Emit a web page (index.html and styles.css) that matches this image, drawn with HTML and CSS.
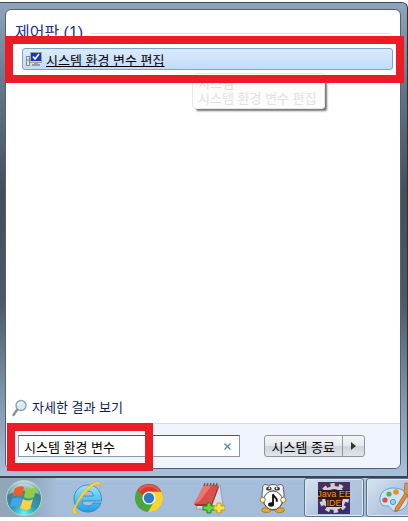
FILE: index.html
```html
<!DOCTYPE html>
<html lang="ko">
<head>
    <meta charset="UTF-8">
    <meta name="viewport" content="width=device-width, initial-scale=1.0">
    <title>시작 메뉴</title>
    <link rel="stylesheet" href="styles.css">
</head>
<body>
    <main class="start-menu">
        <div class="panel">
            <section class="results">
                <h2 class="group-title"><span>제어판 (1)</span></h2>
                <div class="result-row">
                    <a class="result" href="#">
                        <svg class="result-icon" width="16" height="16" viewBox="0 0 16 16">
                            <rect x="0.5" y="5.5" width="3" height="9" fill="#e4e4dc" stroke="#8b8b88"/>
                            <path d="M2 8v2" stroke="#43a047"/>
                            <rect x="4.5" y="1.5" width="11" height="10" fill="#d9d8cf" stroke="#a3a39c"/>
                            <rect x="5" y="2" width="10" height="8" fill="#1537c8"/>
                            <path d="M7 5.500l2 2.500 4-5" fill="none" stroke="#fff" stroke-width="1.600"/>
                            <path d="M8 12h4v1h2v2H6v-2h2z" fill="#9b9b98"/>
                        </svg>
                        <span>시스템 환경 변수 편집</span>
                    </a>
                    <div class="tooltip">시스템<br>시스템 환경 변수 편집</div>
                </div>
                <a class="more" href="#">
                    <svg width="16" height="18" viewBox="0 0 16 18">
                        <path d="M5 11L1.500 16" stroke="#8c8f94" stroke-width="2.400" stroke-linecap="round"/>
                        <circle cx="9" cy="6.500" r="5" fill="#d3eafa" stroke="#8d9dac" stroke-width="1.300"/>
                        <path d="M6 6a3 3 0 0 1 4-2.500" fill="none" stroke="#fff" stroke-width="1.500"/>
                    </svg>
                    <span>자세한 결과 보기</span>
                </a>
            </section>
            <div class="footer">
                <div class="search">
                    <input class="search-input" type="text" value="시스템 환경 변수" aria-label="검색">
                    <button class="clear" type="button" aria-label="지우기">
                        <svg width="7" height="7" viewBox="0 0 7 7"><path d="M.5.5l6 6M6.500.5l-6 6" stroke="#5688ae" stroke-width="1.300"/></svg>
                    </button>
                </div>
                <div class="shutdown">
                    <button class="shutdown-main" type="button">시스템 종료</button>
                    <button class="shutdown-more" type="button" aria-label="종료 옵션">
                        <svg width="5" height="8" viewBox="0 0 5 8"><path d="M0 0l5 4-5 4z" fill="#333"/></svg>
                    </button>
                </div>
            </div>
        </div>
    </main>

    <nav class="taskbar">
        <button class="task orb" type="button" aria-label="시작">
            <svg width="38" height="38" viewBox="0 0 38 38">
                <defs>
                    <radialGradient id="orb" cx=".5" cy=".95" r=".95">
                        <stop offset="0" stop-color="#6ff6f4"/>
                        <stop offset=".35" stop-color="#2b9fb4"/>
                        <stop offset=".7" stop-color="#3f7f93"/>
                        <stop offset="1" stop-color="#d3e4e2"/>
                    </radialGradient>
                    <radialGradient id="glow"><stop offset=".7" stop-color="#76d8a0"/><stop offset="1" stop-color="#76d8a0" stop-opacity="0"/></radialGradient>
                </defs>
                <circle cx="21" cy="20" r="19" fill="url(#glow)" opacity=".8"/>
                <circle cx="19" cy="19" r="17.500" fill="url(#orb)" stroke="#aed8d2"/>
                <path d="M4 15a16 16 0 0 1 30 0q-15-6-30 0z" fill="#fff" opacity=".35"/>
                <path d="M10 9q5-3 9-1l-2 10q-5-3-10 0z" fill="#ee5f27"/>
                <path d="M21 9q5 2 11-1l-3 10q-6 3-10 0z" fill="#8fce3c"/>
                <path d="M7 20q5-3 10 0l-3 9q-4-3-9-1z" fill="#3fa6ee"/>
                <path d="M18 20q5 3 10 0l-3 10q-5 2-10-1z" fill="#ffd23f"/>
            </svg>
        </button>
        <button class="task" type="button" aria-label="Internet Explorer">
            <svg width="34" height="34" viewBox="0 0 34 34">
                <defs>
                    <linearGradient id="ie" x2="0" y2="1"><stop offset="0" stop-color="#9be6ff"/><stop offset="1" stop-color="#1ba0e2"/></linearGradient>
                </defs>
                <path d="M18 4C10 4 4 10 4 18s6 13 14 13c7 0 11-4 13-9h-8c-1 2-2 3-5 3-4 0-6-2-6-5h19.500C32 11 27 4 18 4zM12 15c.5-3 3-5 6-5s5 2 5.500 5z" fill="url(#ie)" fill-rule="evenodd" stroke="#2385c7" stroke-width=".8"/>
                <path d="M6 23C0 31 3 34 9 31c-4 1-5-2-2-7C12 15 19 7 26 3.500c4-1.500 5 1 4 4.500 2-6 0-8-5-6.500C16 5 10 14 6 23z" fill="#ffd33d" stroke="#e9b013" stroke-width=".6"/>
            </svg>
        </button>
        <button class="task" type="button" aria-label="Chrome">
            <svg width="30" height="30" viewBox="0 0 30 30">
                <circle cx="15" cy="15" r="14" fill="#4da63b"/>
                <path d="M15 15L2.900 8A14 14 0 0 1 27.500 8.700H15z" fill="#dc3a2c"/>
                <path d="M27.500 8.700A14 14 0 0 1 14 29l6.500-11L15 8.700z" fill="#fdd32d"/>
                <circle cx="15" cy="15" r="6.600" fill="#f4f4f4"/>
                <circle cx="15" cy="15" r="5.200" fill="#2d7cc5"/>
                <path d="M5 8a12 12 0 0 1 20 0" fill="none" stroke="#fff" stroke-width="2" opacity=".18"/>
            </svg>
        </button>
        <button class="task notes" type="button" aria-label="메모장">
            <svg width="32" height="32" viewBox="0 0 32 32">
                <path d="M12 3h15l3 20-8 4H3z" fill="#d4dce4" stroke="#8a97a5" stroke-width=".8"/>
                <path d="M11 3h14L18 22H1z" fill="#d9504a"/>
                <path d="M11 3h8L7 19l-6 3z" fill="#f08880" opacity=".7"/>
                <path d="M1 22h17l7-19 1 2-7 19H3z" fill="#a9302e"/>
                <path d="M11 4l1-3M14 4l1-3M17 4l1-3M20 4l1-3M23 4l1-3" stroke="#64574f" stroke-width="1.200"/>
                <path d="M14 21h4v3h4v4h-4v3h-4v-3h-4v-4h4z" fill="#69d63c" stroke="#198922"/>
                <path d="M24 21h4v3h4v4h-4v3h-4v-3h-3v-4h3z" fill="#ffe34b" stroke="#c89711"/>
            </svg>
        </button>
        <button class="task" type="button" aria-label="음악 재생기">
            <svg width="28" height="32" viewBox="0 0 30 32">
                <ellipse cx="8" cy="29" rx="5" ry="2.500" fill="#f1a51c" stroke="#8f6417" stroke-width=".7"/>
                <ellipse cx="22" cy="29" rx="5" ry="2.500" fill="#f1a51c" stroke="#8f6417" stroke-width=".7"/>
                <path d="M4 7c-1-5 3-7 6-4 3-2 7-2 10 0 3-3 7-1 6 4 2 6 1 20-11 22C3 27 2 13 4 7z" fill="#f4f4f2" stroke="#555"/>
                <ellipse cx="10.500" cy="6" rx="3" ry="2" fill="#333"/>
                <ellipse cx="19.500" cy="6" rx="3" ry="2" fill="#333"/>
                <circle cx="11" cy="5.500" r="1" fill="#fff"/><circle cx="19" cy="5.500" r="1" fill="#fff"/>
                <ellipse cx="15" cy="8.500" rx="2" ry="1" fill="#b99a5c"/>
                <circle cx="15" cy="18.500" r="10" fill="#fff" stroke="#444"/>
                <circle cx="4" cy="18" r="2.800" fill="#fff3cd" stroke="#8b7643"/>
                <circle cx="26" cy="18" r="2.800" fill="#fff3cd" stroke="#8b7643"/>
                <ellipse cx="13" cy="23" rx="3.200" ry="2.400" fill="#111"/>
                <path d="M15 23V12c1 4 5 3 4 8" fill="none" stroke="#111" stroke-width="2"/>
            </svg>
        </button>
        <button class="task running java" type="button" aria-label="Java EE IDE">
            <svg width="32" height="32" viewBox="0 0 32 32">
                <defs>
                    <linearGradient id="java" x2="0" y2="1"><stop offset="0" stop-color="#4b3159"/><stop offset="1" stop-color="#3c2b75"/></linearGradient>
                </defs>
                <rect width="32" height="32" fill="url(#java)"/>
                <circle cx="16" cy="16" r="13" fill="none" stroke="#d2d2d6" stroke-width="4" stroke-dasharray="4.200 4"/>
                <circle cx="16" cy="16" r="10.500" fill="#2b2530" stroke="#d2d2d6" stroke-width="3"/>
                <path d="M0 8h32v9H24v8H8v-8H0z" fill="#241c26"/>
                <g class="java-text">
                    <text x="16" y="15">Java EE</text>
                    <text x="16" y="24">IDE</text>
                </g>
            </svg>
        </button>
        <button class="task running paint" type="button" aria-label="그림판">
            <svg width="34" height="32" viewBox="0 0 34 32">
                <path d="M14 6C5 6 0 12 1 19c1 5 5 5 8 5 3 1 3 6 9 5 8-1 12-7 11-13C28 9 22 6 14 6z" fill="#c8e4f6" stroke="#6a9fc8"/>
                <circle cx="6" cy="18" r="2.600" fill="#e34a3d"/>
                <circle cx="10" cy="12" r="2.600" fill="#59b63d"/>
                <circle cx="17" cy="10" r="2.800" fill="#f08a2c"/>
                <circle cx="14" cy="20" r="2.600" fill="#9ccbe9" stroke="#4e98cf"/>
                <path d="M16 30q-1-4 3-8l7-11 3 2-7 11q-2 5-6 6z" fill="#e9882c" stroke="#a75f1f" stroke-width=".7"/>
                <path d="M25 11l1-10 6 1v10l-3 1z" fill="#cb9960" stroke="#966b3b" stroke-width=".7"/>
            </svg>
        </button>
    </nav>
</body>
</html>
```
FILE: styles.css
```css
*,
*::before,
*::after {
    box-sizing: border-box;
}

body {
    margin: 0;
    padding: 2px 0 4px;
    min-height: 100vh;
    display: flex;
    flex-direction: column;
    overflow-x: hidden;
    background-color: #fff;
    font-family: "Liberation Sans", "Noto Sans CJK KR", sans-serif;
    font-size: 13px;
    color: #000;
}

button,
input {
    font: inherit;
    color: inherit;
}

a {
    color: inherit;
}

.start-menu {
    flex: 1;
    display: flex;
    padding: 6px 6px 7px 5px;
    border-top: 1px solid #3d4b55;
    border-right: 1px solid #26343c;
    border-top-right-radius: 6px;
    background: linear-gradient(#8fa4bc, #66788b 17%, #434f5b 40%, #4c5966 63%, #8297ad 84%, #a8c1dd);
}

.panel {
    flex: 1;
    display: flex;
    flex-direction: column;
    border: 1px solid #56616c;
    border-radius: 6px;
    background-color: #fff;
}

.results {
    flex: 1;
    display: flex;
    flex-direction: column;
    padding: 12px 7px 5px 6px;
}

.group-title {
    display: flex;
    align-items: center;
    gap: 7px;
    margin: 0 3px 4px;
    font-size: 16px;
    font-weight: normal;
    line-height: 22px;
    color: #1f3287;
}

.group-title::after {
    content: "";
    flex: 1;
    border-top: 1px solid #e0e2e6;
}

.result-row {
    position: relative;
    margin-left: 10px;
}

.result {
    display: flex;
    align-items: center;
    gap: 4px;
    height: 22px;
    padding-left: 3px;
    border: 1px solid #7da2ce;
    border-radius: 3px;
    background: linear-gradient(#dcebfd, #c1dbfc);
}

/* red frame round the result */
.result-row::after {
    content: "";
    position: absolute;
    z-index: 2;
    inset: -12px -11px -13px -17px;
    border: 8px solid #ed1c24;
    pointer-events: none;
}

.tooltip {
    position: absolute;
    z-index: 1;
    top: 25px;
    left: 170px;
    padding: 2px 8px 2px 5px;
    border: 1px solid #e8e8e8;
    border-radius: 3px;
    background-color: #fcfcfd;
    box-shadow: 3px 3px 2px -1px #777;
    line-height: 15px;
    white-space: nowrap;
    color: #e2e2e2;
}

.more {
    display: flex;
    align-items: center;
    gap: 4px;
    margin-top: auto;
    line-height: 20px;
    text-decoration: none;
    color: #0b1d5c;
}

.footer {
    display: flex;
    align-items: center;
    gap: 24px;
    height: 45px;
    padding: 0 35px 0 12px;
    border-top: 1px solid #cfe0ea;
    border-radius: 0 0 6px 6px;
    background-color: #f0f4fc;
}

.search {
    position: relative;
    flex: 1;
    display: flex;
    height: 22px;
    border: 1px solid #8d98a3;
    border-top-color: #4f565d;
    background-color: #fff;
}

.search-input {
    flex: 1;
    min-width: 0;
    padding: 0 5px;
    border: 0;
    outline: 0;
    background: none;
}

/* red frame round the typed text */
.search::after {
    content: "";
    position: absolute;
    inset: -13px auto -15px -12px;
    width: 146px;
    border: 8px solid #ed1c24;
    pointer-events: none;
}

.clear {
    display: flex;
    align-items: center;
    padding: 0 8px;
    border: 0;
    background: none;
}

.shutdown {
    display: flex;
    height: 22px;
    border: 1px solid #8f959c;
    border-radius: 3px;
    background: linear-gradient(#f5f6f8, #e5e8ec 48%, #d0d4da 52%, #e2e5ea);
}

.shutdown-main,
.shutdown-more {
    display: flex;
    align-items: center;
    justify-content: center;
    padding: 0 7px;
    border: 0;
    background: none;
    white-space: nowrap;
}

.shutdown-more {
    width: 22px;
    border-left: 1px solid #8f959c;
}

.taskbar {
    display: flex;
    align-items: stretch;
    height: 41px;
    border-top: 2px solid #39444e;
    overflow: hidden;
    background: linear-gradient(#b9cee5, #a5bedb 3px, #a5bcd9);
}

.task {
    flex: none;
    display: flex;
    align-items: center;
    justify-content: center;
    width: 62px;
    padding: 0;
    border: 0;
    background: none;
}

.orb {
    width: 56px;
    padding-right: 8px;
    background: linear-gradient(90deg, #92a6ba, #92a6ba 50%, #a5bcd9);
}

.notes {
    padding-right: 4px;
}

.running {
    width: 60px;
    border: 1px solid #5f748c;
    border-radius: 3px;
    background: linear-gradient(135deg, #d7e3f0, #b2c6de 50%, #a9c0dc);
    box-shadow: inset 0 0 0 1px #dce8f4;
}

.paint {
    margin-left: 2px;
}

.java-text {
    font-size: 9px;
    text-anchor: middle;
    fill: #ff8f1f;
}
```
